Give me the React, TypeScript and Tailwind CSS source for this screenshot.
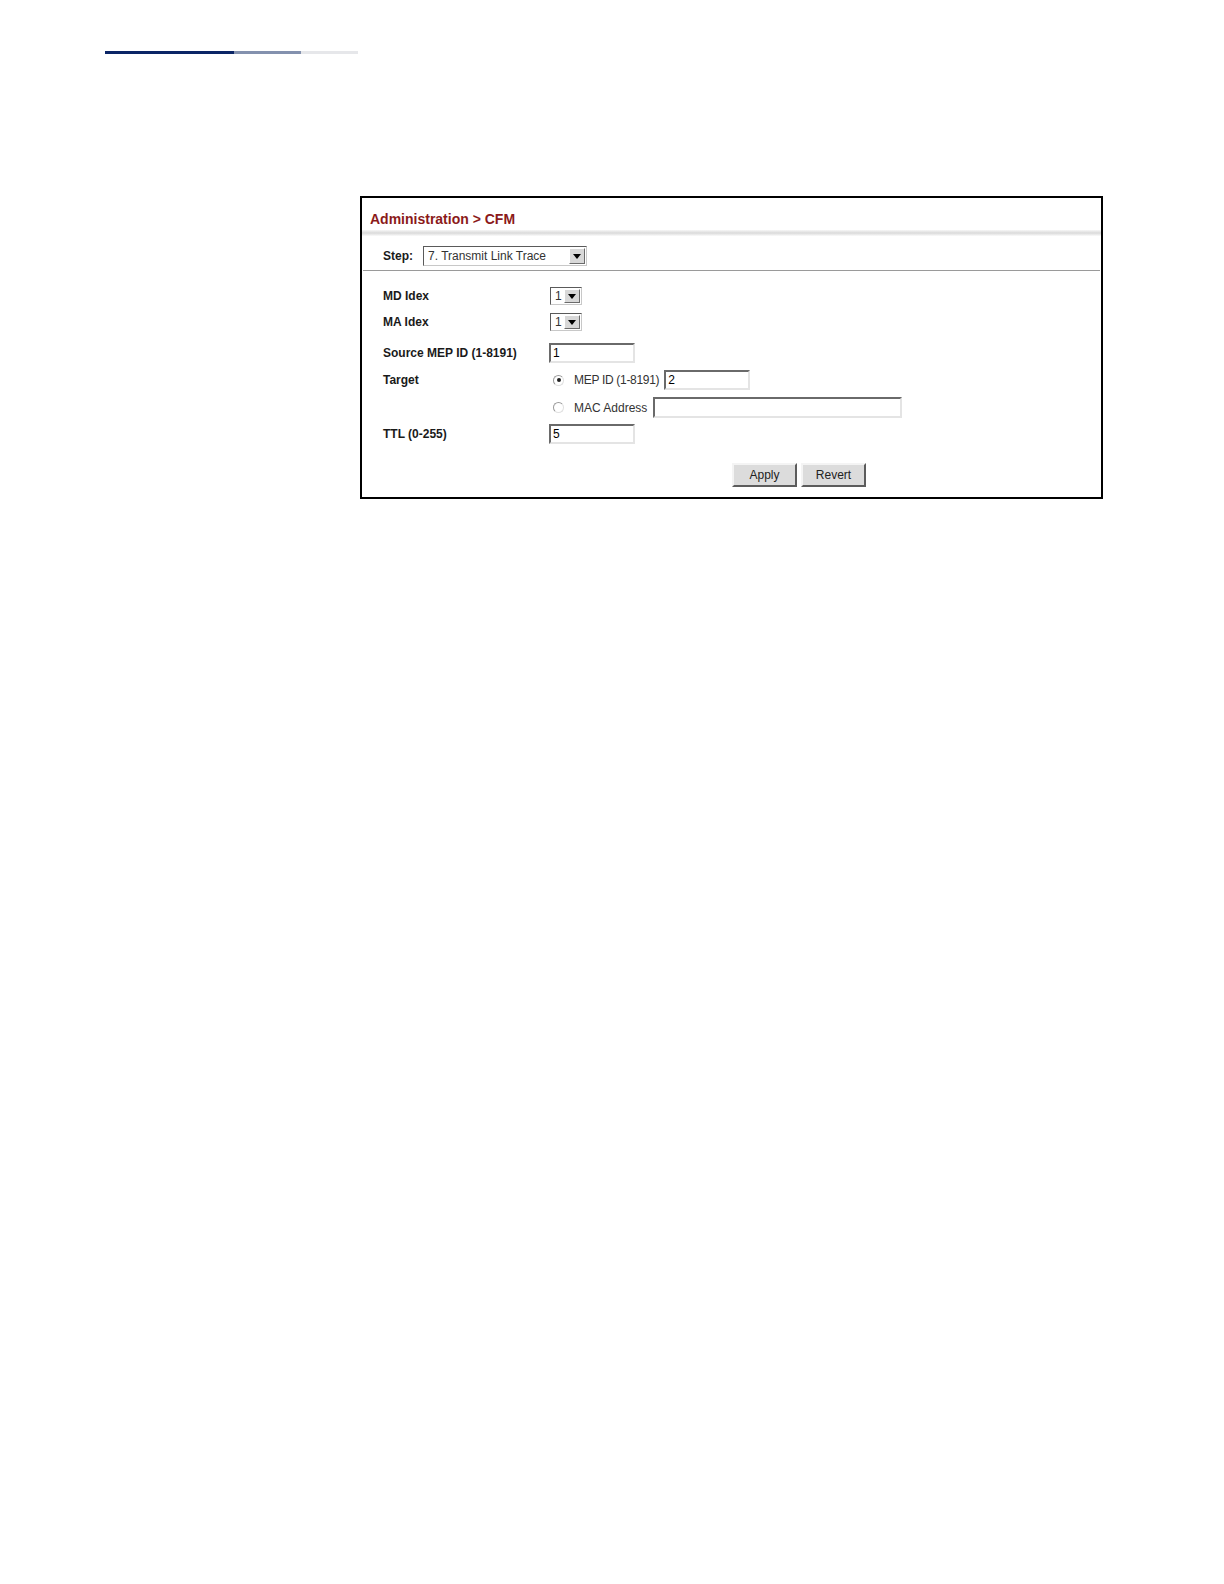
import type { ReactNode } from 'react'

const FONT = 'font-["Liberation_Sans",Arial,sans-serif]'

function DropButton() {
  return (
    <div className="flex h-full w-[16px] items-center justify-center border border-l-white border-t-white border-r-[#6b6b6b] border-b-[#6b6b6b] bg-[#d8d8d8]">
      <svg width="8" height="5" viewBox="0 0 8 5">
        <path d="M0 0h8L4 5z" fill="#000" />
      </svg>
    </div>
  )
}

function Select({ value, width }: { value: string; width: number }) {
  return (
    <div
      style={{ width }}
      className="flex h-full items-stretch border border-t-[#5a5a5a] border-l-[#5a5a5a] border-r-[#c8c8c8] border-b-[#c8c8c8] bg-white p-px"
    >
      <div className="flex flex-1 items-center pl-[3px] text-[12px] text-[#333]">{value}</div>
      <DropButton />
    </div>
  )
}

function Input({ value = '', width }: { value?: string; width: number }) {
  return (
    <div
      style={{ width }}
      className="flex h-[20px] items-center border-[2px] border-t-[#6a6a6a] border-l-[#6a6a6a] border-r-[#e4e4e4] border-b-[#e4e4e4] bg-white pl-[2px] text-[12px] text-black"
    >
      {value}
    </div>
  )
}

function Radio({ checked }: { checked?: boolean }) {
  return (
    <div className="flex h-[11px] w-[11px] items-center justify-center rounded-full border border-t-[#9a9a9a] border-l-[#9a9a9a] border-r-[#e0e0e0] border-b-[#e0e0e0] bg-white">
      {checked && <div className="h-[4px] w-[4px] rounded-full bg-[#222]" />}
    </div>
  )
}

function Row({ label, children, className = '' }: { label?: string; children: ReactNode; className?: string }) {
  return (
    <div className={`flex items-center ${className}`}>
      <div className="w-[166px] shrink-0 text-[12px] font-bold text-[#1a1a1a]">{label}</div>
      {children}
    </div>
  )
}

function Button({ children }: { children: ReactNode }) {
  return (
    <div className="flex h-[24px] w-[65px] items-center justify-center border-[2px] border-t-[#f4f4f4] border-l-[#f4f4f4] border-r-[#5c5c5c] border-b-[#5c5c5c] bg-[#dcdcdc] text-[12px] text-[#222]">
      {children}
    </div>
  )
}

export default function App() {
  return (
    <div className={`bg-white pb-[40px] ${FONT}`}>
      <div className="flex pl-[105px] pt-[51px]">
        <div className="h-[3px] w-[129px] bg-[#0b2566]" />
        <div className="h-[3px] w-[67px] bg-[#8391ae]" />
        <div className="h-[3px] w-[57px] bg-[#e6e7ea]" />
      </div>

      <div className="ml-[360px] mt-[142px] h-[303px] w-[743px] border-[2px] border-black">
        <div className="pl-[8px] pt-[13px] text-[14px] font-bold leading-[16px] text-[#8b1a1a]">
          Administration &gt; CFM
        </div>
        <div className="mt-[3px] h-[6px] bg-gradient-to-b from-[#f6f6f6] via-[#dadada] to-[#fbfbfb]" />

        <div className="mt-[10px] flex h-[20px] items-center pl-[21px]">
          <span className="w-[40px] text-[12px] font-bold text-[#1a1a1a]">Step:</span>
          <Select value="7. Transmit Link Trace" width={164} />
        </div>
        <div className="mx-px mt-[4px] h-px bg-[#9a9a9a]" />

        <div className="pl-[21px]">
          <Row label="MD Idex" className="mt-[16px] h-[18px]">
            <div className="ml-px h-[18px]">
              <Select value="1" width={32} />
            </div>
          </Row>
          <Row label="MA Idex" className="mt-[8px] h-[18px]">
            <div className="ml-px h-[18px]">
              <Select value="1" width={32} />
            </div>
          </Row>
          <Row label="Source MEP ID (1-8191)" className="mt-[12px] h-[20px]">
            <Input value="1" width={86} />
          </Row>
          <Row label="Target" className="mt-[7px] h-[20px]">
            <div className="ml-[4px] flex items-center">
              <Radio checked />
              <span className="ml-[10px] text-[12px] tracking-[-0.3px] text-[#333]">MEP ID (1-8191)</span>
              <div className="ml-[5px]">
                <Input value="2" width={86} />
              </div>
            </div>
          </Row>
          <Row className="mt-[7px] h-[21px]">
            <div className="ml-[4px] flex items-center">
              <Radio />
              <span className="ml-[10px] text-[12px] text-[#333]">MAC Address</span>
              <div className="ml-[6px]">
                <div className="flex h-[21px] w-[249px] items-center border-[2px] border-t-[#6a6a6a] border-l-[#6a6a6a] border-r-[#e4e4e4] border-b-[#e4e4e4] bg-white" />
              </div>
            </div>
          </Row>
          <Row label="TTL (0-255)" className="mt-[6px] h-[20px]">
            <Input value="5" width={86} />
          </Row>
        </div>

        <div className="mt-[19px] flex gap-[4px] pl-[370px]">
          <Button>Apply</Button>
          <Button>Revert</Button>
        </div>
      </div>
    </div>
  )
}
